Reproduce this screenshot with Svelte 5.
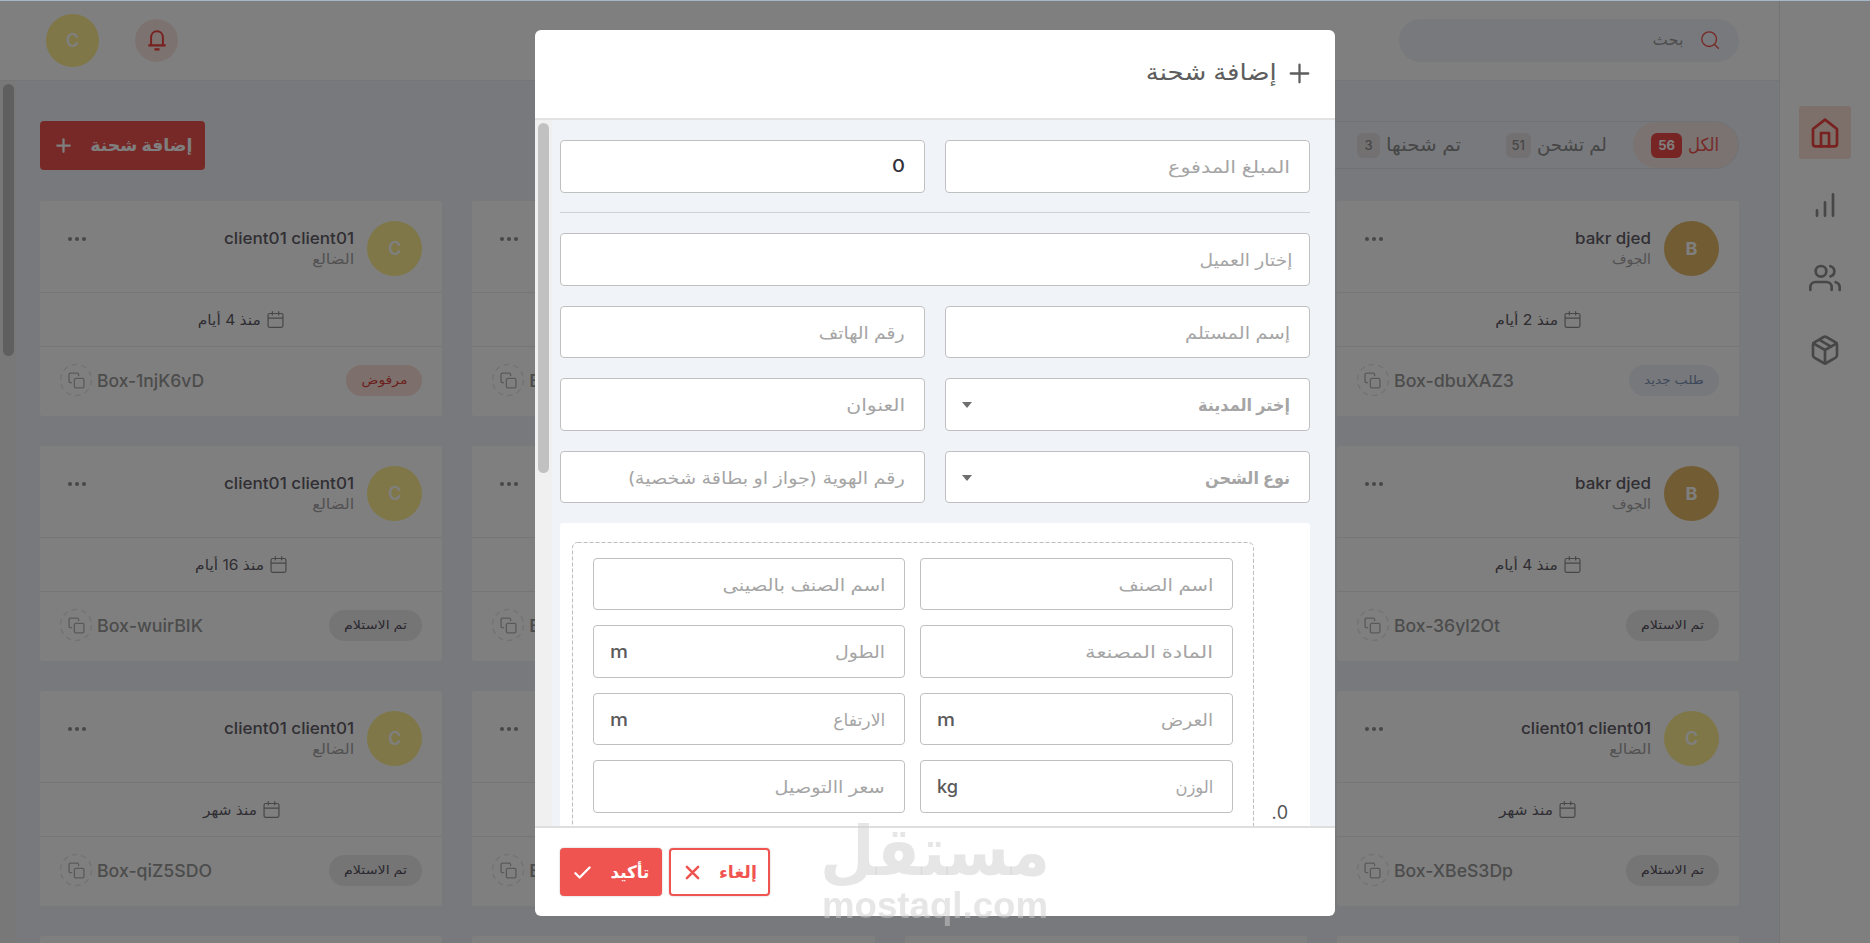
<script>
  const navIcons = ['home', 'chart', 'users', 'box'];

  const kinds = {
    rejected: { label: 'مرفوض', w: 46 },
    fresh: { label: 'طلب جديد', w: 60 },
    received: { label: 'تم الاستلام', w: 63 },
  };

  const bakr = { letter: 'B', name: 'bakr djed', nameW: 76, city: 'الجوف', cityW: 39 };
  const client = { letter: 'C', name: 'client01 client01', nameW: 130, city: 'الضالع', cityW: 42 };

  const rows = [
    [
      { ...bakr, date: 'منذ 2 أيام', dateW: 63, kind: 'fresh', code: 'Box-dbuXAZ3', codeW: 120 },
      null,
      { code: 'Box', codeW: 36 },
      { ...client, date: 'منذ 4 أيام', dateW: 63, kind: 'rejected', code: 'Box-1njK6vD', codeW: 107 },
    ],
    [
      { ...bakr, date: 'منذ 4 أيام', dateW: 63, kind: 'received', code: 'Box-36yl2Ot', codeW: 106 },
      null,
      { code: 'Box', codeW: 36 },
      { ...client, date: 'منذ 16 أيام', dateW: 69, kind: 'received', code: 'Box-wuirBIK', codeW: 106 },
    ],
    [
      { ...client, date: 'منذ شهر', dateW: 54, kind: 'received', code: 'Box-XBeS3Dp', codeW: 119 },
      null,
      { code: 'Box', codeW: 36 },
      { ...client, date: 'منذ شهر', dateW: 54, kind: 'received', code: 'Box-qiZ5SDO', codeW: 115 },
    ],
    [null, null, null, null],
  ];
  const cards = rows.flat();

  const itemFields = [
    { label: 'اسم الصنف', w: 95 },
    { label: 'اسم الصنف بالصينى', w: 163 },
    { label: 'المادة المصنعة', w: 128 },
    { label: 'الطول', w: 50, unit: 'm', unitW: 18 },
    { label: 'العرض', w: 52, unit: 'm', unitW: 18 },
    { label: 'الارتفاع', w: 52, unit: 'm', unitW: 18 },
    { label: 'الوزن', w: 38, unit: 'kg', unitW: 21 },
    { label: 'سعر االتوصيل', w: 110 },
  ];

  // Condenses or widens a line of text to the measure it is given.
  function fit(node, width) {
    const inner = node.firstElementChild;
    inner.style.transform = `scaleX(${width / inner.getBoundingClientRect().width})`;
  }
</script>

{#snippet t(text, w, ltr = false)}
  <span class="t" class:ltr style:width="{w}px" use:fit={w}><span class="ti">{text}</span></span>
{/snippet}

{#snippet icon(name, size, sw = 2)}
  <svg width={size} height={size} viewBox="0 0 24 24" fill="none" stroke="currentColor" stroke-width={sw} stroke-linecap="round" stroke-linejoin="round">
    {#if name === 'home'}
      <path d="M3 9l9-7 9 7v11a2 2 0 0 1-2 2H5a2 2 0 0 1-2-2z" /><path d="M9 22V12h6v10" />
    {:else if name === 'chart'}
      <path d="M12 20V10M18 20V4M6 20v-4" />
    {:else if name === 'users'}
      <path d="M17 21v-2a4 4 0 0 0-4-4H5a4 4 0 0 0-4 4v2" /><circle cx="9" cy="7" r="4" /><path d="M23 21v-2a4 4 0 0 0-3-3.87M16 3.13a4 4 0 0 1 0 7.75" />
    {:else if name === 'box'}
      <path d="M16.5 9.4l-9-5.19M21 16V8a2 2 0 0 0-1-1.73l-7-4a2 2 0 0 0-2 0l-7 4A2 2 0 0 0 3 8v8a2 2 0 0 0 1 1.73l7 4a2 2 0 0 0 2 0l7-4A2 2 0 0 0 21 16z" /><path d="M3.27 6.96L12 12.01l8.73-5.05M12 22.08V12" />
    {:else if name === 'search'}
      <circle cx="11" cy="11" r="8.8" /><path d="M22 22l-4.6-4.6" />
    {:else if name === 'calendar'}
      <rect x="1.500" y="3.500" width="21" height="19.500" rx="2.2" /><path d="M7.5 1v4.5M16.5 1v4.5M2 10h20" />
    {:else if name === 'copy'}
      <rect x="9" y="9" width="13.5" height="13.5" rx="2" /><path d="M5 15H3.5a2 2 0 0 1-2-2V3.5a2 2 0 0 1 2-2H13a2 2 0 0 1 2 2V5" />
    {:else if name === 'plus'}
      <path d="M12 2v20M2 12h20" />
    {:else if name === 'check'}
      <path d="M2 13l6 6L22 5" />
    {:else if name === 'x'}
      <path d="M3 3l18 18M21 3L3 21" />
    {/if}
  </svg>
{/snippet}

<div class="app" dir="rtl">
  <nav class="side">
    {#each navIcons as n, i}
      <div class="nav" class:on={i === 0}>{@render icon(n, 32)}</div>
    {/each}
  </nav>

  <div class="main">
    <header class="top">
      <div class="search">
        {@render icon('search', 20, 1.7)}
        {@render t('بحث', 31)}
      </div>
      <div class="tools">
        <div class="bell">
          <svg width="22" height="24" viewBox="0 0 22 24" fill="none" stroke="currentColor" stroke-width="2.2">
            <path d="M4.5 17.5V9.5C4.5 5.5 7 2.5 11 2.5s6.500 3 6.500 7v8" /><path d="M1.500 17.900h19" stroke-width="2.600" /><path d="M8.200 22.300h5.600" stroke-width="2.600" />
          </svg>
        </div>
        <div class="avatar me">C</div>
      </div>
    </header>

    <div class="content">
      <div class="bar">
        <div class="tabs">
          <div class="tab on">{@render t('الكل', 31)}<b>56</b></div>
          <div class="tab second">{@render t('لم تشحن', 70)}<b>51</b></div>
          <div class="tab third">{@render t('تم شحنها', 75)}<b>3</b></div>
        </div>
        <div class="add">{@render t('إضافة شحنة', 102)}{@render icon('plus', 15, 3.6)}</div>
      </div>

      <div class="grid">
        {#each cards as c}
          <article class="card">
            <div class="head">
              {#if c?.name}
                <div class="avatar" class:gold={c.letter === 'B'}>{c.letter}</div>
                <div class="who">
                  <div class="name">{@render t(c.name, c.nameW, true)}</div>
                  <div class="city">{@render t(c.city, c.cityW)}</div>
                </div>
              {/if}
              {#if c}<div class="dots"><i></i><i></i><i></i></div>{/if}
            </div>
            <div class="date">
              {#if c?.date}{@render icon('calendar', 17, 1.7)}{@render t(c.date, c.dateW)}{/if}
            </div>
            <div class="foot">
              {#if c?.kind}
                <div class="pill {c.kind}">{@render t(kinds[c.kind].label, kinds[c.kind].w)}</div>
              {/if}
              {#if c}
                <div class="code">
                  {@render t(c.code, c.codeW, true)}
                  <span class="copy">
                    <svg class="ring" width="34" height="34" viewBox="0 0 34 34" fill="none"><circle cx="17" cy="17" r="15.500" stroke="#e6e6e6" stroke-width="1.500" stroke-dasharray="5.500 4.240" /></svg>
                    {@render icon('copy', 17, 1.9)}
                  </span>
                </div>
              {/if}
            </div>
          </article>
        {/each}
      </div>
    </div>
  </div>
  <div class="rail"><div class="thumb"></div></div>
</div>

<div class="overlay" dir="rtl">
  <section class="modal">
    <div class="mhead">
      {@render icon('plus', 21, 2.6)}
      {@render t('إضافة شحنة', 131)}
    </div>
    <div class="mbody">
      <div class="form">
        <div class="two">
          <div class="field">{@render t('المبلغ المدفوع', 122)}</div>
          <div class="field value">{@render t('0', 13, true)}</div>
        </div>
        <hr />
        <div class="field client">{@render t('إختار العميل', 93)}</div>
        <div class="two">
          <div class="field">{@render t('إسم المستلم', 105)}</div>
          <div class="field">{@render t('رقم الهاتف', 86)}</div>
          <div class="field select">{@render t('إختر المدينة', 92)}<i class="caret"></i></div>
          <div class="field">{@render t('العنوان', 59)}</div>
          <div class="field select">{@render t('نوع الشحن', 85)}<i class="caret"></i></div>
          <div class="field">{@render t('رقم الهوية (جواز او بطاقة شخصية)', 277)}</div>
        </div>
        <div class="items">
          <div class="index">0.</div>
          <div class="dashed">
            <svg class="dash" width="683" height="300" fill="none"><rect x="0.500" y="0.500" width="681" height="330" rx="5" stroke="#bdbdbd" stroke-dasharray="4 2" /></svg>
            {#each itemFields as f}
              <div class="field">
                {@render t(f.label, f.w)}
                {#if f.unit}<span class="unit">{@render t(f.unit, f.unitW, true)}</span>{/if}
              </div>
            {/each}
          </div>
        </div>
      </div>
      <div class="rail light"><div class="thumb"></div></div>
    </div>
    <div class="mfoot">
      <div class="btn ghost">{@render t('إلغاء', 38)}{@render icon('x', 15, 4)}</div>
      <div class="btn">{@render t('تأكيد', 39)}{@render icon('check', 17, 3.2)}</div>
    </div>
  </section>
  <div class="mark" dir="ltr">
    <div class="mark-ar">{@render t('مستقل', 230, true)}</div>
    <div class="mark-en">{@render t('mostaql.com', 226, true)}</div>
  </div>
</div>
<div class="edge"></div>

<style>
  :global(body) { overflow: hidden; }
  .app, .overlay { font-family: Inter, "DejaVu Sans", sans-serif; box-sizing: border-box; }
  .app *, .overlay * { box-sizing: border-box; }
  svg { display: block; flex: none; }
  .t { display: flex; flex: none; white-space: nowrap; direction: rtl; line-height: 1.2; }
  .ti { flex: none; transform-origin: 100% 50%; }
  .t.ltr { direction: ltr; }
  .t.ltr .ti { transform-origin: 0 50%; }

  .app { display: flex; width: 1870px; height: 943px; overflow: hidden; background: #f0f3f8; position: relative; }
  .side { width: 91px; background: #fff; border-left: 1px solid #e8e8ea; padding: 106px 19px 0 19px; display: flex; flex-direction: column; gap: 19.500px; }
  .nav { height: 53px; width: 52px; display: flex; align-items: center; justify-content: center; color: #8e8e8e; border-radius: 3px; }
  .nav.on { background: #fadfd2; color: #ef4440; }
  .main { flex: 1; display: flex; flex-direction: column; }
  .top { height: 81px; flex: none; background: #fff; border-bottom: 1px solid #e8eaee; display: flex; justify-content: space-between; align-items: center; padding: 0 40px 0 46px; }
  .search { width: 340px; height: 43px; border-radius: 22px; background: #f0f3f8; display: flex; align-items: center; gap: 17px; padding-right: 19px; color: #ef5350; }
  .search .t { color: #9b9b9b; font-size: 16px; }
  .tools { display: flex; align-items: center; gap: 36px; }
  .bell { width: 43px; height: 43px; border-radius: 50%; background: #f9e6e0; color: #ef4440; display: flex; align-items: center; justify-content: center; }
  .bell svg { width: 20px; }
  .avatar { width: 55px; height: 55px; flex: none; border-radius: 50%; background: #ffee90; color: #fff; font-size: 18px; font-weight: 600; display: flex; align-items: center; justify-content: center; }
  .avatar.me { width: 53px; height: 53px; }
  .avatar.gold { background: #e4b868; font-weight: 700; }
  .content { padding: 40px 40px 0; overflow: hidden; flex: 1; }
  .bar { display: flex; justify-content: space-between; height: 80px; align-items: flex-start; }
  .tabs { display: flex; width: 560px; height: 48px; border: 1px solid #e0e2e6; border-radius: 24px; font-size: 18px; color: #8c8c8c; }
  .tab { display: flex; align-items: center; gap: 6px; height: 46px; padding: 0 19px 0 16px; border-radius: 23px; }
  .tab.on { background: #f5e6e3; color: #ef5350; width: 105px; font-weight: 500; }
  .tab.second { margin-right: 7px; }
  .tab.third { margin-right: 10px; }
  .tab b { background: #e6e0e3; color: #8f8f8f; font-size: 13px; font-weight: 500; height: 25px; line-height: 25px; padding: 0 6px; border-radius: 6px; }
  .tab.third b { padding: 0 7px; }
  .tab.on b { background: #ef4a48; color: #fff; font-weight: 700; padding: 0 7px; }
  .add { display: flex; align-items: center; gap: 19px; width: 165px; height: 49px; background: #ef5350; border-radius: 4px; color: #fff; font-weight: 700; font-size: 17px; padding-right: 13px; }
  .grid { display: grid; grid-template-columns: repeat(4, 1fr); gap: 30px; }
  .card { height: 215px; background: #fff; border-radius: 3px; }
  .head { height: 92px; border-bottom: 1px solid #ececec; display: flex; padding: 20px 20px 0 28px; }
  .who { padding: 8px 13px 0 0; }
  .name { color: #625d68; font-size: 16px; font-weight: 500; }
  .city { color: #a5a3a5; font-size: 14px; margin-top: 3px; }
  .dots { display: flex; gap: 3px; margin: 16px auto 0 0; }
  .dots i { width: 4px; height: 4px; border-radius: 50%; background: #8f8f8f; }
  .date { height: 54px; border-bottom: 1px solid #ececec; display: flex; align-items: center; justify-content: center; gap: 6px; color: #8f8f8f; }
  .date .t { color: #5f5b66; font-size: 14px; padding-top: 1px; }
  .foot { display: flex; justify-content: space-between; align-items: center; padding: 16px 20px 0 19px; height: 50px; }
  .pill { height: 31px; display: flex; align-items: center; border-radius: 16px; padding: 0 15px; font-size: 12px; font-weight: 500; }
  .rejected { background: #fbdfd6; color: #d6403a; }
  .fresh { background: #eef1f7; color: #7e92b8; }
  .received { background: #ebebeb; color: #56515e; }
  .code { display: flex; align-items: center; gap: 4px; font-size: 17.500px; font-weight: 500; color: #989898; margin-right: auto; }
  .copy { position: relative; width: 34px; height: 34px; display: flex; align-items: center; justify-content: center; color: #b5b5b5; }
  .ring { position: absolute; inset: 0; }

  .rail { position: absolute; left: 0; top: 81px; bottom: 0; width: 17px; background: #f1f1f1; padding: 3px 3px 0; }
  .thumb { width: 11px; height: 272px; background: #bfbfbf; border-radius: 6px; }

  .overlay { position: fixed; inset: 0; background: rgba(0, 0, 0, .5); display: flex; justify-content: center; align-items: flex-start; padding-top: 30px; }
  .modal { width: 800px; height: 886px; border-radius: 6px; background: #fff; display: flex; flex-direction: column; overflow: hidden; }
  .mhead { height: 90px; flex: none; border-bottom: 2px solid #e2e2e2; display: flex; align-items: center; gap: 12px; padding: 0 25px 2px; color: #5d5d5d; font-size: 23px; font-weight: 500; }
  .mbody { height: 706px; flex: none; position: relative; overflow: hidden; background: #f0f3f8; padding: 20px 25px 0; }
  .rail.light { top: 0; background: #f0f0f0; }
  .light .thumb { height: 350px; background: #c1c1c1; }
  .form { display: flex; flex-direction: column; }
  .two { display: grid; grid-template-columns: 1fr 1fr; gap: 20px; }
  .field { height: 52.500px; background: #fff; border: 1px solid #c0c0c0; border-radius: 4px; display: flex; align-items: center; justify-content: space-between; padding: 2px 19px 0 16px; color: #a5a5a5; font-size: 17px; }
  .field.value { color: #33303a; font-size: 17px; font-weight: 500; padding-top: 0; }
  .field.select { font-weight: 600; padding-left: 16px; }
  .field.client { margin-bottom: 20px; padding-right: 17px; }
  hr { width: 100%; height: 1px; border: 0; margin: 19.500px 0 20px; background: #d2d2d2; }
  .caret { border: 5.500px solid transparent; border-bottom: 0; border-top: 6px solid #6e6e6e; }
  .items { margin-top: 20px; background: #fff; border-radius: 3px; height: 400px; padding-top: 18.500px; display: flex; }
  .index { width: 56px; padding: 260px 22px 0 0; color: #555; font-size: 18px; }
  .dashed { position: relative; width: 682px; display: grid; grid-template-columns: 313px 312px; gap: 15px; padding: 16px 21px 0 21px; align-content: start; }
  .dash { position: absolute; left: 0; top: 0; }
  .unit { color: #5a5a5a; font-size: 18px; font-weight: 500; }
  .mfoot { flex: 1; border-top: 2px solid #dedede; display: flex; justify-content: flex-end; gap: 7px; padding: 20px 25px 0; }
  .btn { width: 102px; height: 48px; border-radius: 4px; background: #f05451; color: #fff; font-size: 17px; font-weight: 700; display: flex; align-items: center; justify-content: space-between; padding: 0 13px 0 14px; box-shadow: 0 0 2px rgba(0, 0, 0, .25); }
  .btn.ghost { background: #fff; border: 2px solid #f05451; color: #f05451; width: 101px; padding: 0 11px 0 14px; }
  .mark { position: absolute; left: 822px; top: 820px; width: 226px; color: rgba(205, 205, 205, .5); font-weight: 700; pointer-events: none; }
  .mark-ar { font-size: 68px; height: 64px; margin-left: -2px; font-family: "DejaVu Sans", sans-serif; }
  .mark-ar .t { line-height: 64px; }
  .mark-en { font-size: 36px; font-family: "Liberation Sans", sans-serif; }
  .edge { position: fixed; top: 0; left: 0; right: 0; height: 1px; background: #a5b6c8; }
</style>
